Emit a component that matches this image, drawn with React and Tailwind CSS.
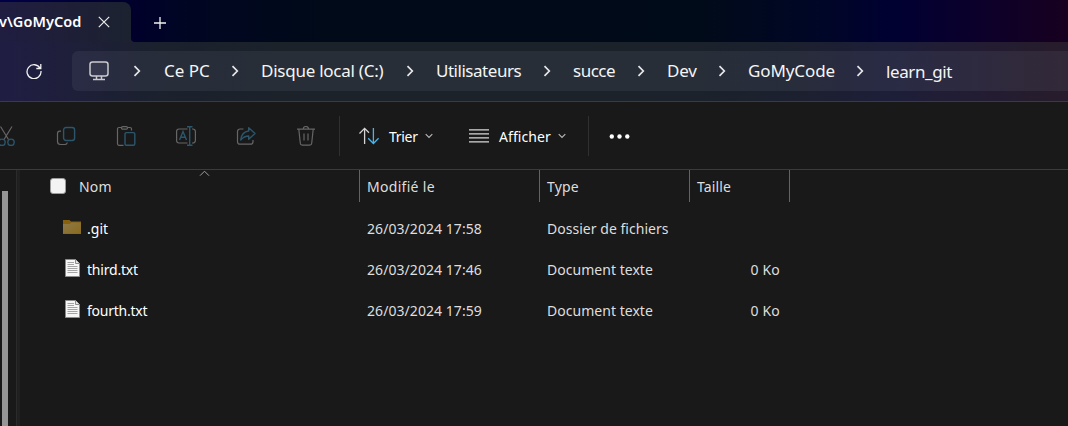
import React from "react";

const Chevron = () => (
  <svg className="h-3 w-2 shrink-0" viewBox="0 0 8 12" fill="none" stroke="#e8e8ea" strokeWidth="1.7">
    <path d="M1.5 1.2 6.3 6 1.5 10.8" />
  </svg>
);

const ChevronDown = () => (
  <svg className="h-2 w-2 shrink-0" viewBox="0 0 8 8" fill="none" stroke="#b5b5b5" strokeWidth="1.2">
    <path d="M.7 2.2 4 5.5 7.3 2.2" />
  </svg>
);

const CRUMBS = [
  { label: "Ce PC", cell: "w-[67px] ml-[23px]", track: "tracking-[0px]" },
  { label: "Disque local (C:)", cell: "w-[145px] ml-[22px]", track: "tracking-[-0.25px]" },
  { label: "Utilisateurs", cell: "w-[107px] ml-[22px]", track: "tracking-[-0.47px]" },
  { label: "succe", cell: "w-[64px] ml-[22px]", track: "tracking-[-0.5px]" },
  { label: "Dev", cell: "w-[51px] ml-[22px]", track: "tracking-[-0.2px]" },
  { label: "GoMyCode", cell: "w-[108px] ml-[22px]", track: "tracking-[-0.1px]" },
  { label: "learn_git", cell: "w-[80px] ml-[22px] pt-0.5", track: "tracking-[-0.4px]" },
];

const FILES = [
  { name: ".git", track: "tracking-[0.05px]", date: "26/03/2024 17:58", type: "Dossier de fichiers", size: "", folder: true },
  { name: "third.txt", track: "tracking-[-0.2px]", date: "26/03/2024 17:46", type: "Document texte", size: "0 Ko" },
  { name: "fourth.txt", track: "tracking-[-0.25px]", date: "26/03/2024 17:59", type: "Document texte", size: "0 Ko" },
];

const FolderIcon = () => (
  <svg className="ml-[43px] mr-1.5 h-[18px] w-[18px] shrink-0" viewBox="0 0 18 18">
    <defs>
      <linearGradient id="folder" x1="0" y1="0" x2="1" y2="1">
        <stop offset="0" stopColor="#8d794b" />
        <stop offset="1" stopColor="#8a6a1c" />
      </linearGradient>
    </defs>
    <path d="M0 2h6.5l1.5 1.5h10V7H0z" fill="#87600f" />
    <path d="M0 6h6.5L8.5 4.500H18V16H0z" fill="url(#folder)" />
    <path d="M0 15.300h18v.7H0z" fill="#8c6a10" />
  </svg>
);

const TextIcon = () => (
  <svg className="ml-[45px] mr-[7px] h-[18px] w-[15px] shrink-0" viewBox="0 0 15 18">
    <path d="M.5.5h10l4 4v13H.5z" fill="#f6f6f6" stroke="#8b8b8b" />
    <path d="M10.500.5v4h4" fill="#e4e4e4" stroke="#8b8b8b" />
    <path d="M2.500 3.500H9M2.500 5.500H9M2.500 7.500h10M2.500 9.500h10M2.500 11.500h10M2.500 13.500h10" stroke="#a4a4a4" />
  </svg>
);

function TitleArea() {
  return (
    <header className="h-[101px] bg-[linear-gradient(90deg,#000048_0px,#00002c_130px,#000622_190px,#000a18_330px,#000b19_700px,#000628_830px,#000032_895px,#0b002c_970px,#18001f_1068px)]">
      <div className="flex h-[42px] pt-0.5">
        <div className="relative flex h-10 w-[131px] items-center rounded-tr-lg bg-[linear-gradient(90deg,#201d41_0px,#1e1f37_70px,#1c2230_131px)] text-white">
          <span className="ml-[-1px] w-[83px] whitespace-nowrap text-[14.5px] font-semibold tracking-[0.05px]">v\GoMyCod</span>
          <svg className="ml-4 h-3 w-3" viewBox="0 0 12 12" stroke="#ececec" strokeWidth="1.200">
            <path d="M.8.8 11.200 11.200M11.200.8.8 11.200" />
          </svg>
          <svg className="absolute bottom-0 left-[131px] h-1 w-1" viewBox="0 0 4 4">
            <path d="M0 0Q0 4 4 4H0z" fill="#1c2230" />
          </svg>
        </div>
        <svg className="ml-[23px] mt-[15px] h-3 w-3" viewBox="0 0 12 12" stroke="#f2f2f2" strokeWidth="1.300">
          <path d="M6 0v12M0 6h12" />
        </svg>
      </div>
      <div className="flex h-[59px] items-start bg-[linear-gradient(90deg,#201d43_0px,#1e1f3a_70px,#1b212d_160px,#1b222a_280px,#1b222b_700px,#1c2030_810px,#1d1e39_890px,#221d34_960px,#271c2b_1068px)] pt-[9px]">
        <svg className="ml-[26px] mt-3 h-4 w-4 shrink-0" viewBox="0 0 16 16" fill="none" stroke="#f0f0f0" strokeWidth="1.300">
          <path d="M14.200 5.400A7 7 0 1 0 15 8M14.800 1v4.500h-4.500" />
        </svg>
        <div className="ml-[30px] flex h-10 flex-1 items-center rounded-l-md bg-[#d8e0ea]/[0.065] text-[17px] text-[#f5f5f5]">
          <svg className="ml-[17px] mr-6 h-5 w-5 shrink-0" viewBox="0 0 20 20" fill="none" stroke="#c9cacd" strokeWidth="1.500">
            <rect x="1" y="1" width="18" height="14" rx="2.500" fill="#ffffff" fillOpacity=".06" />
            <path d="M7.500 15v3M12.500 15v3M4 18.400h12" />
          </svg>
          {CRUMBS.map((c) => (
            <div key={c.label} className="flex items-center">
              <Chevron />
              <span className={`whitespace-nowrap leading-6 ${c.cell} ${c.track}`}>{c.label}</span>
            </div>
          ))}
        </div>
      </div>
    </header>
  );
}

function Toolbar() {
  return (
    <div className="flex h-[69px] items-center border-y border-[#3b3b3b] text-[14px] text-white">
      <div className="flex items-center gap-10 text-[#666666]">
        <svg className="-ml-1 h-5 w-5 shrink-0" viewBox="0 0 20 20" fill="none" stroke="currentColor" strokeWidth="1.200">
          <path d="M4.500.5 12.500 13.500M16 .5 8 13.500" />
          <g stroke="#2b566c" strokeWidth="1.400"><circle cx="6" cy="16.300" r="3.200" /><circle cx="15" cy="16.300" r="3.200" /></g>
        </svg>
        <svg className="h-5 w-5" viewBox="0 0 20 20" fill="none" stroke="currentColor" strokeWidth="1.200">
          <path d="M5 5.200H3.800A2.300 2.300 0 0 0 1.500 7.500v8A3 3 0 0 0 4.500 18.500H9a2.300 2.300 0 0 0 2.300-2" />
          <rect x="7.600" y="1.500" width="11" height="13" rx="2.500" stroke="#2b566c" strokeWidth="1.400" />
        </svg>
        <svg className="h-5 w-5" viewBox="0 0 20 20" fill="none" stroke="currentColor" strokeWidth="1.200">
          <path d="M7.500 19.300H3A1.500 1.500 0 0 1 1.500 17.800V3A1.500 1.500 0 0 1 3 1.500h2.500M11.500 1.500H14A1.500 1.500 0 0 1 15.500 3v1.500" />
          <rect x="5.500" y=".7" width="6" height="2.400" rx="1.200" />
          <rect x="9" y="6.600" width="9.800" height="12.700" rx="1.500" stroke="#2b566c" strokeWidth="1.400" />
        </svg>
        <svg className="h-5 w-5" viewBox="0 0 20 20" fill="none" stroke="currentColor" strokeWidth="1.200">
          <path d="M11.500 17H3A2.500 2.500 0 0 1 .6 14.500v-9A2.500 2.500 0 0 1 3 3h8.500M16 3h.8a2.500 2.500 0 0 1 2.600 2.500v9a2.500 2.500 0 0 1-2.600 2.500H16" />
          <path d="M3.500 14 7 5.500 10.500 14M4.700 11.200h4.600M11 .7h5.500M11 19.300h5.500M13.700.7v18.600" stroke="#2b566c" strokeWidth="1.400" />
        </svg>
        <svg className="h-5 w-5" viewBox="0 0 20 20" fill="none" stroke="currentColor" strokeWidth="1.200">
          <path d="M7.500 3H4A2.500 2.500 0 0 0 1.500 5.500v10.200A2.500 2.500 0 0 0 4 18.200h10.500a2.500 2.500 0 0 0 2.500-2.500V14" />
          <path d="M12.700 1.800 19 7.600l-6.300 5.700V10C9.500 10 7 11.300 4.700 14 5.300 9 8 5.500 12.700 5z" stroke="#2b566c" strokeWidth="1.400" strokeLinejoin="round" />
        </svg>
        <svg className="h-5 w-5" viewBox="0 0 20 20" fill="none" stroke="currentColor" strokeWidth="1.200">
          <path d="M1 3.200h18M7.200 3.200a2.600 2.600 0 0 1 5.400 0M2.800 3.200l1.500 14a2 2 0 0 0 2 1.900h7.400a2 2 0 0 0 2-1.900l1.500-14M8 7.500v7M12 7.500v7" />
        </svg>
      </div>
      <div className="ml-[23px] h-10 w-px bg-[#303030]" />
      <svg className="ml-[19px] h-5 w-5" viewBox="0 0 20 20" fill="none" strokeWidth="1.300">
        <path d="M5.600 18V2.500M.5 7.500 5.600 2.400 10 6.800" stroke="#d5d5d5" />
        <path d="M14.400 2v15.500M9.200 12.300l5.200 5.200 5.200-5.200" stroke="#4cb4ec" />
      </svg>
      <span className="ml-2.5 mt-0.5 w-[36px] tracking-[-0.3px]">Trier</span>
      <ChevronDown />
      <svg className="ml-9 h-5 w-5" viewBox="0 0 20 20" stroke="#d8d8d8" strokeWidth="1.200">
        <path d="M0 3.800h20M0 7.800h20M0 11.800h20M0 15.800h20" />
      </svg>
      <span className="ml-2.5 mt-0.5 w-[59px] tracking-[0.08px]">Afficher</span>
      <ChevronDown />
      <div className="ml-[22px] h-10 w-px bg-[#303030]" />
      <svg className="ml-[20px] h-5 w-[22px]" viewBox="0 0 22 20" fill="#ffffff">
        <circle cx="2.800" cy="10.500" r="2.200" /><circle cx="10.500" cy="10.500" r="2.200" /><circle cx="18.300" cy="10.500" r="2.200" />
      </svg>
    </div>
  );
}

function FileList() {
  return (
    <main className="flex-1 text-[14px] text-[#dedede]">
      <div className="flex h-8 items-center tracking-[0.15px]">
        <div className="relative flex h-8 w-[340px] items-center border-r border-[#636363]">
          <div className="ml-[30px] h-4 w-4 rounded-[3px] border border-[#9c9c9c] bg-[#f3f3f3]" />
          <span className="ml-[13px]">Nom</span>
          <svg className="absolute left-[179px] top-0 h-[7px] w-[11px]" viewBox="0 0 11 7" fill="none" stroke="#a0a0a0">
            <path d="M1 5.700 5.500 1.200 10 5.700" />
          </svg>
        </div>
        <div className="flex h-8 w-[180px] items-center border-r border-[#636363] pl-[7px] tracking-[0.3px]">Modifié le</div>
        <div className="flex h-8 w-[150px] items-center border-r border-[#636363] pl-[7px]">Type</div>
        <div className="flex h-8 w-[100px] items-center border-r border-[#636363] pl-[7px]">Taille</div>
      </div>
      <div className="pt-1.5">
        {FILES.map((f) => (
          <div key={f.name} className="flex h-[41px] items-center">
            <div className="flex w-[347px] items-center text-white">
              <span className="relative -top-0.5">{f.folder ? <FolderIcon /> : <TextIcon />}</span>
              <span className={f.track}>{f.name}</span>
            </div>
            <div className="w-[180px] tracking-[0.06px]">{f.date}</div>
            <div className="w-[150px] tracking-[0.03px]">{f.type}</div>
            <div className="w-[83px] text-right tracking-[0.2px]">{f.size}</div>
          </div>
        ))}
      </div>
    </main>
  );
}

export default function App() {
  return (
    <div className="flex h-[426px] w-[1068px] flex-col overflow-hidden bg-[#191919] font-['Noto_Sans',sans-serif]">
      <TitleArea />
      <Toolbar />
      <div className="flex flex-1">
        <aside className="flex w-5 shrink-0 justify-between">
          <div className="ml-0.5 mt-[21px] w-1.5 bg-[#969696]" />
          <div className="w-1 border-l border-[#2b2b2b] bg-[#202020]" />
        </aside>
        <FileList />
      </div>
    </div>
  );
}
